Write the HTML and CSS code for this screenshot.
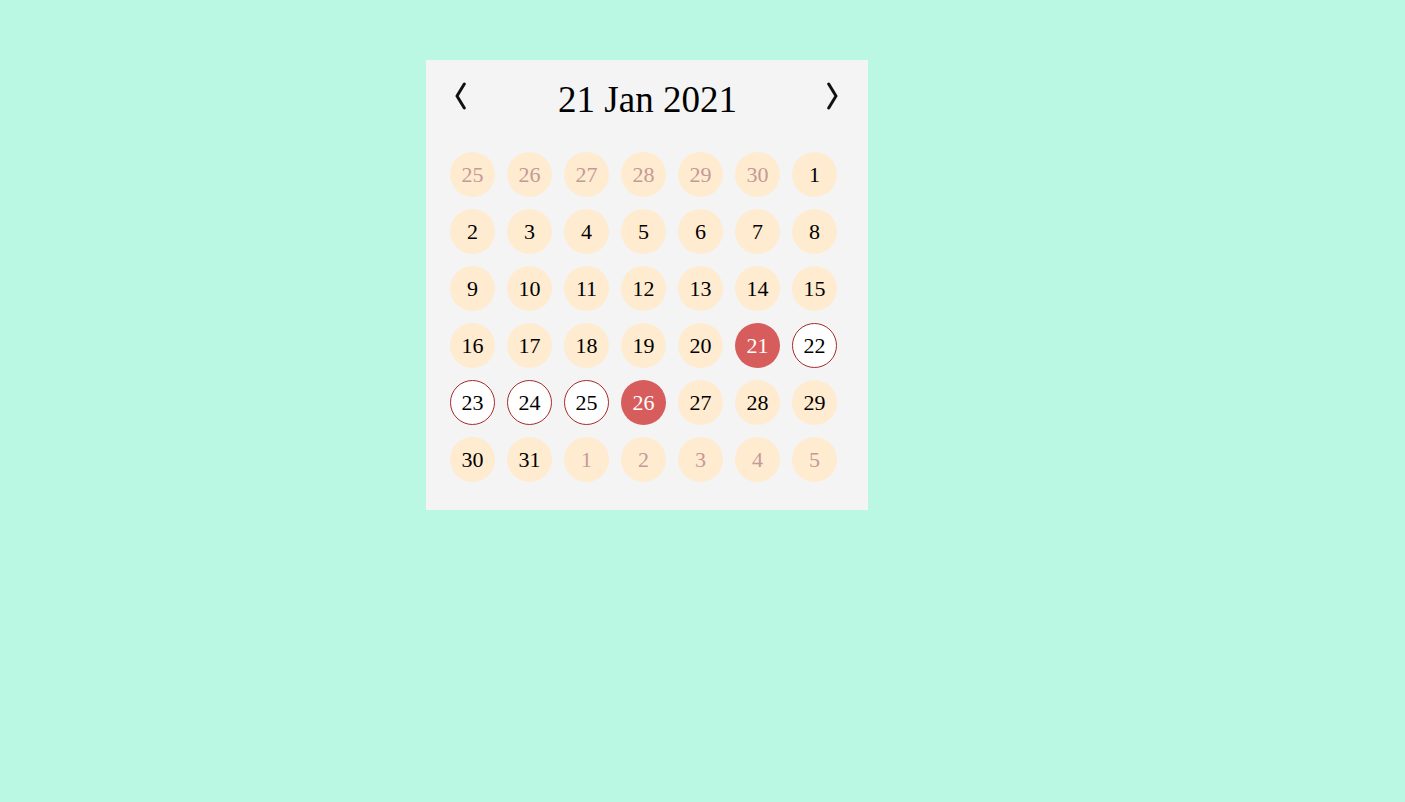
FILE: index.html
```html
<!DOCTYPE html>
<html>
<head>
<meta charset="utf-8">
<link rel="stylesheet" href="styles.css">
</head>
<body>
<div class="calendar">
  <div class="header">
    <button class="nav prev" aria-label="previous">
      <svg width="11" height="28" viewBox="0 0 11 28"><path d="M9.3 2 L2 14 L9.3 26" fill="none" stroke="#111" stroke-width="3" stroke-linecap="round" stroke-linejoin="round"/></svg>
    </button>
    <div class="title">21 Jan 2021</div>
    <button class="nav next" aria-label="next">
      <svg width="11" height="28" viewBox="0 0 11 28"><path d="M1.7 2 L9 14 L1.7 26" fill="none" stroke="#111" stroke-width="3" stroke-linecap="round" stroke-linejoin="round"/></svg>
    </button>
  </div>
  <div class="grid">
    <div class="day muted">25</div><div class="day muted">26</div><div class="day muted">27</div><div class="day muted">28</div><div class="day muted">29</div><div class="day muted">30</div><div class="day">1</div>
    <div class="day">2</div><div class="day">3</div><div class="day">4</div><div class="day">5</div><div class="day">6</div><div class="day">7</div><div class="day">8</div>
    <div class="day">9</div><div class="day">10</div><div class="day">11</div><div class="day">12</div><div class="day">13</div><div class="day">14</div><div class="day">15</div>
    <div class="day">16</div><div class="day">17</div><div class="day">18</div><div class="day">19</div><div class="day">20</div><div class="day selected">21</div><div class="day range">22</div>
    <div class="day range">23</div><div class="day range">24</div><div class="day range">25</div><div class="day selected">26</div><div class="day">27</div><div class="day">28</div><div class="day">29</div>
    <div class="day">30</div><div class="day">31</div><div class="day muted">1</div><div class="day muted">2</div><div class="day muted">3</div><div class="day muted">4</div><div class="day muted">5</div>
  </div>
</div>
</body>
</html>
```
FILE: styles.css
```css
html, body {
  margin: 0;
  padding: 0;
  background: #bbf8e4;
  font-family: "Liberation Serif", "Times New Roman", serif;
}
body {
  width: 1405px;
  height: 802px;
}
.calendar {
  margin: 60px 0 0 426px;
  width: 442px;
  height: 450px;
  box-sizing: border-box;
  background: #f4f4f4;
  padding: 20px 31px 0 24px;
}
.header {
  display: flex;
  align-items: center;
  justify-content: space-between;
  height: 40px;
  margin-bottom: 32px;
}
.nav {
  background: none;
  border: none;
  padding: 0;
  margin: 0;
  width: 11px;
  height: 28px;
  display: flex;
  align-items: center;
  justify-content: center;
  cursor: pointer;
}
.prev { margin-left: 5px; margin-top: -8px; }
.next { margin-right: -1px; margin-top: -8px; }
.title {
  font-size: 37px;
  color: #000;
  line-height: 40px;
  padding-left: 2px;
}
.grid {
  display: grid;
  grid-template-columns: repeat(7, 45px);
  grid-auto-rows: 45px;
  column-gap: 12px;
  row-gap: 12px;
}
.day {
  width: 45px;
  height: 45px;
  border-radius: 50%;
  background: #ffebd0;
  display: flex;
  align-items: center;
  justify-content: center;
  font-size: 22px;
  color: #000;
  box-sizing: border-box;
}
.day.muted {
  color: #c49a98;
}
.day.selected {
  background: #d75c5c;
  color: #fff;
}
.day.range {
  background: #fff;
  border: 1px solid #a52a2a;
}
```
